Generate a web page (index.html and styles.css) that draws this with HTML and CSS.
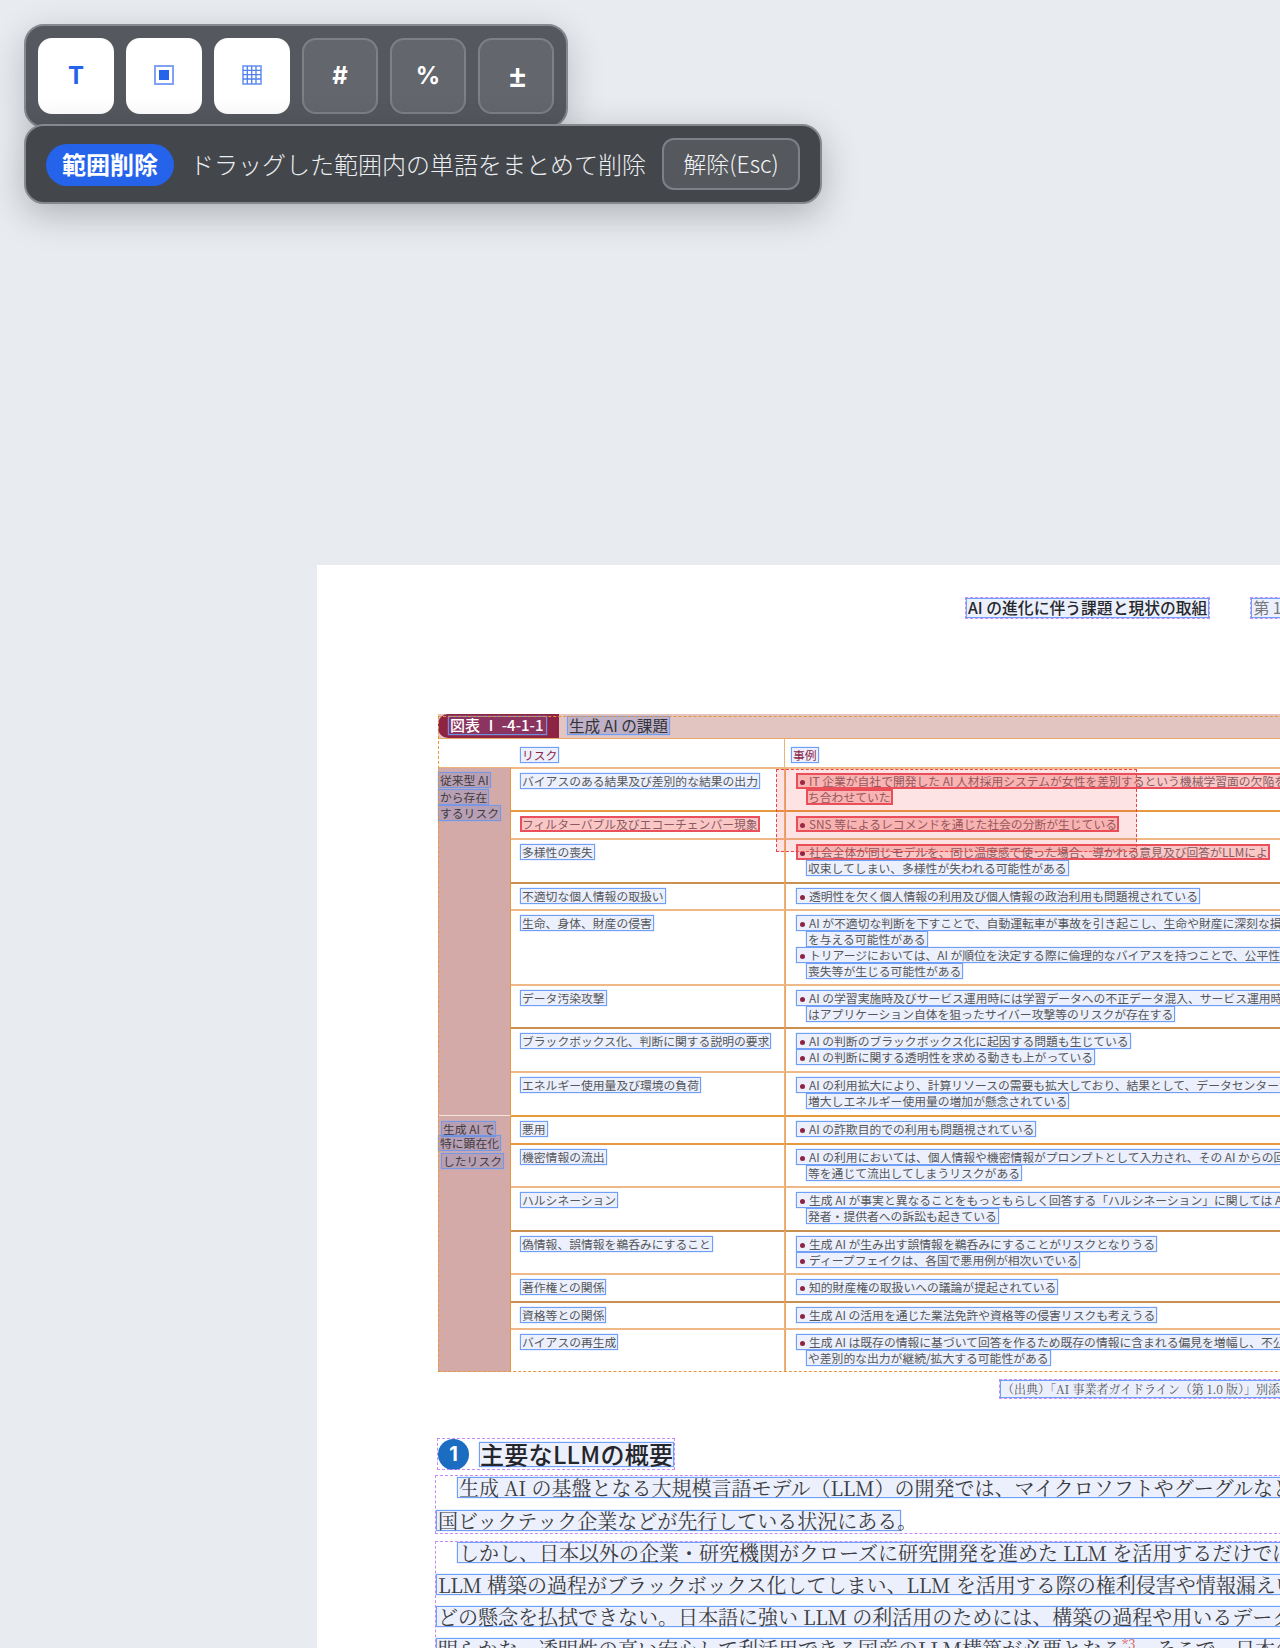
FILE: index.html
```html
<!DOCTYPE html>
<html lang="ja">
<head>
  <meta charset="UTF-8" />
  <meta name="viewport" content="width=device-width, initial-scale=1.0">
  <title>範囲削除</title>
  <link rel="stylesheet" href="styles.css">
</head>
<body>
  <div class="hud">
    <div class="toolbar">
      <button class="tool on t-glyph">T</button>
      <button class="tool on">
        <svg width="20" height="20" viewBox="0 0 20 20"><rect x="1" y="1" width="18" height="18" fill="#fff" stroke="#7fa3f2" stroke-width="2"/><rect x="5" y="5" width="10" height="10" fill="#2563eb"/></svg>
      </button>
      <button class="tool on">
        <svg width="20" height="20" viewBox="0 0 20 20"><rect x="1" y="1" width="18" height="18" fill="#fff" stroke="#6d97f0" stroke-width="1.6"/><path d="M5.3 1v18M9.7 1v18M14 1v18M1 5.3h18M1 9.7h18M1 14h18" stroke="#4f80ee" stroke-width="1.3" fill="none"/></svg>
      </button>
      <button class="tool">#</button>
      <button class="tool">%</button>
      <button class="tool plusminus">±</button>
    </div>
    <div class="modebar">
      <span class="pill">範囲削除</span>
      <span class="hint">ドラッグした範囲内の単語をまとめて削除</span>
      <button class="cancel">解除(Esc)</button>
    </div>
  </div>

  <div class="viewer">
    <div class="page">
      <div class="running">
        <span class="w blk">AI の進化に伴う課題と現状の取組</span>
        <span class="w chap blk">第 1 章　AI 技術の動向</span>
      </div>

      <div class="fig">
        <div class="fig-head">
          <div class="fig-label"><span class="w">図表 Ⅰ -4-1-1</span></div>
          <span class="w fig-title">生成 AI の課題</span>
        </div>
        <div class="fig-cols">
          <div class="col-risk"><span class="w">リスク</span></div>
          <div class="col-case"><span class="w">事例</span></div>
        </div>
        <div class="grid">
          <div class="band band-a">
            <span class="w">従来型 AI</span>
            <span class="w">から存在</span>
            <span class="w">するリスク</span>
          </div>
          <div class="risk lt"><span class="w">バイアスのある結果及び差別的な結果の出力</span></div>
          <div class="case lt">
            <span class="w red bul">IT 企業が自社で開発した AI 人材採用システムが女性を差別するという機械学習面の欠陥を持</span>
            <span class="w red cont">ち合わせていた</span>
          </div>
          <div class="risk"><span class="w red">フィルターバブル及びエコーチェンバー現象</span></div>
          <div class="case"><span class="w red bul">SNS 等によるレコメンドを通じた社会の分断が生じている</span></div>
          <div class="risk lt"><span class="w">多様性の喪失</span></div>
          <div class="case lt">
            <span class="w red bul">社会全体が同じモデルを、同じ温度感で使った場合、導かれる意見及び回答がLLMによ</span>
            <span class="w cont">収束してしまい、多様性が失われる可能性がある</span>
          </div>
          <div class="risk dk"><span class="w">不適切な個人情報の取扱い</span></div>
          <div class="case dk"><span class="w bul">透明性を欠く個人情報の利用及び個人情報の政治利用も問題視されている</span></div>
          <div class="risk lt"><span class="w">生命、身体、財産の侵害</span></div>
          <div class="case lt">
            <span class="w bul">AI が不適切な判断を下すことで、自動運転車が事故を引き起こし、生命や財産に深刻な損害</span>
            <span class="w cont">を与える可能性がある</span>
            <span class="w bul">トリアージにおいては、AI が順位を決定する際に倫理的なバイアスを持つことで、公平性の</span>
            <span class="w cont">喪失等が生じる可能性がある</span>
          </div>
          <div class="risk lt"><span class="w">データ汚染攻撃</span></div>
          <div class="case lt">
            <span class="w bul">AI の学習実施時及びサービス運用時には学習データへの不正データ混入、サービス運用時に</span>
            <span class="w cont">はアプリケーション自体を狙ったサイバー攻撃等のリスクが存在する</span>
          </div>
          <div class="risk dk"><span class="w">ブラックボックス化、判断に関する説明の要求</span></div>
          <div class="case dk">
            <span class="w bul">AI の判断のブラックボックス化に起因する問題も生じている</span>
            <span class="w bul">AI の判断に関する透明性を求める動きも上がっている</span>
          </div>
          <div class="risk lt"><span class="w">エネルギー使用量及び環境の負荷</span></div>
          <div class="case lt">
            <span class="w bul">AI の利用拡大により、計算リソースの需要も拡大しており、結果として、データセンターが</span>
            <span class="w cont">増大しエネルギー使用量の増加が懸念されている</span>
          </div>

          <div class="band band-b">
            <span class="w">生成 AI で</span>
            <span class="w">特に顕在化</span>
            <span class="w">したリスク</span>
          </div>
          <div class="risk"><span class="w">悪用</span></div>
          <div class="case"><span class="w bul">AI の詐欺目的での利用も問題視されている</span></div>
          <div class="risk"><span class="w">機密情報の流出</span></div>
          <div class="case">
            <span class="w bul">AI の利用においては、個人情報や機密情報がプロンプトとして入力され、その AI からの回答</span>
            <span class="w cont">等を通じて流出してしまうリスクがある</span>
          </div>
          <div class="risk lt"><span class="w">ハルシネーション</span></div>
          <div class="case lt">
            <span class="w bul">生成 AI が事実と異なることをもっともらしく回答する「ハルシネーション」に関しては AI 開</span>
            <span class="w cont">発者・提供者への訴訟も起きている</span>
          </div>
          <div class="risk dk"><span class="w">偽情報、誤情報を鵜呑みにすること</span></div>
          <div class="case dk">
            <span class="w bul">生成 AI が生み出す誤情報を鵜呑みにすることがリスクとなりうる</span>
            <span class="w bul">ディープフェイクは、各国で悪用例が相次いでいる</span>
          </div>
          <div class="risk lt"><span class="w">著作権との関係</span></div>
          <div class="case lt"><span class="w bul">知的財産権の取扱いへの議論が提起されている</span></div>
          <div class="risk dk"><span class="w">資格等との関係</span></div>
          <div class="case dk"><span class="w bul">生成 AI の活用を通じた業法免許や資格等の侵害リスクも考えうる</span></div>
          <div class="risk lt"><span class="w">バイアスの再生成</span></div>
          <div class="case lt">
            <span class="w bul">生成 AI は既存の情報に基づいて回答を作るため既存の情報に含まれる偏見を増幅し、不公平</span>
            <span class="w cont">や差別的な出力が継続/拡大する可能性がある</span>
          </div>
        </div>
        <div class="drag-rect"></div>
      </div>

      <div class="source"><span class="w blk">（出典）「AI 事業者ガイドライン（第 1.0 版）」別添（概要）</span></div>

      <div class="heading blk">
        <span class="num">1</span>
        <span class="w">主要なLLMの概要</span>
      </div>

      <div class="para blk">
        <span class="w indent">生成 AI の基盤となる大規模言語モデル（LLM）の開発では、マイクロソフトやグーグルなど米</span>
        <span class="w trim">国ビックテック企業などが先行している状況にある。</span>
      </div>
      <div class="para blk second">
        <span class="w indent">しかし、日本以外の企業・研究機関がクローズに研究開発を進めた LLM を活用するだけでは、</span>
        <span class="w">LLM 構築の過程がブラックボックス化してしまい、LLM を活用する際の権利侵害や情報漏えいな</span>
        <span class="w">どの懸念を払拭できない。日本語に強い LLM の利活用のためには、構築の過程や用いるデータが</span>
        <span class="w">明らかな、透明性の高い安心して利活用できる国産のLLM構築が必要となる<span class="note">*3</span>。そこで、日本の企業</span>
      </div>
    </div>
  </div>
</body>
</html>
```

FILE: styles.css
```css
html, body {
  margin: 0;
  padding: 0;
  height: 1648px;
  overflow: hidden;
}
body {
  font-family: "Noto Sans CJK JP", "Noto Sans", sans-serif;
  background-color: #e8ebf0;
}

/* floating toolbar */
.hud {
  position: absolute;
  top: 24px;
  left: 24px;
  z-index: 5;
  display: flex;
  flex-direction: column;
  align-items: flex-start;
}
.toolbar {
  display: flex;
  gap: 12px;
  padding: 12px;
  background-color: #55585f;
  border: 2px solid #85888d;
  border-radius: 20px;
  box-shadow: 0 10px 36px rgba(0, 0, 0, 0.2);
}
.tool {
  width: 76px;
  height: 76px;
  display: flex;
  align-items: center;
  justify-content: center;
  padding: 0 0 2px;
  font-family: "Inter", sans-serif;
  font-size: 24px;
  font-weight: 700;
  color: #ffffff;
  background-color: #63666d;
  border: 2px solid #7d8086;
  border-radius: 14px;
}
.tool.on {
  background-color: #ffffff;
  border-color: #ffffff;
  color: #2563eb;
}
.tool.plusminus {
  padding-left: 3px;
  font-family: "Noto Sans", sans-serif;
  font-size: 30px;
}
.modebar {
  display: flex;
  align-items: center;
  gap: 16px;
  margin-top: -4px;
  padding: 12px 20px;
  background-color: #43464b;
  border: 2px solid #85888d;
  border-radius: 20px;
  box-shadow: 0 10px 36px rgba(0, 0, 0, 0.25);
}
.pill {
  margin-top: 2px;
  padding: 0 16px;
  height: 42px;
  line-height: 40px;
  font-size: 24px;
  font-weight: 700;
  color: #ffffff;
  background-color: #2563eb;
  border-radius: 21px;
}
.hint {
  margin-top: -2px;
  font-size: 24px;
  font-weight: 300;
  color: #eceef1;
  white-space: nowrap;
}
.cancel {
  width: 138px;
  height: 52px;
  padding: 0 0 2px;
  font-family: "Noto Sans CJK JP", sans-serif;
  font-size: 23px;
  font-weight: 300;
  color: #f3f4f6;
  background-color: #55585d;
  border: 2px solid #7d8086;
  border-radius: 12px;
}

/* document page */
.viewer {
  padding: 565px 0 0 317px;
}
.page {
  width: 1000px;
  height: 1083px;
  box-sizing: border-box;
  padding: 33px 0 0 121px;
  background-color: #ffffff;
}
.w {
  display: inline-block;
  box-sizing: border-box;
  white-space: nowrap;
  font-size: 11.8px;
  line-height: 14px;
  padding: 0 1px;
  color: #55565a;
  background-color: rgba(190, 205, 245, 0.3);
  border: 1px solid #6f9ff7;
  box-shadow: 0 0 1px #7fa9f7;
}
.red {
  padding: 0;
  line-height: 12px;
  color: #8a5a60;
  background-color: rgba(239, 68, 68, 0.3);
  border: 2px solid #e9505c;
  box-shadow: none;
}
.blk {
  outline: 1px dashed #c48bfb;
}
.running {
  display: flex;
  gap: 42px;
  margin-left: 528px;
  height: 20px;
}
.running .w {
  font-size: 15.8px;
  font-weight: 500;
  line-height: 18px;
  color: #27282c;
}
.running .chap {
  font-weight: 400;
  color: #77787c;
}

/* figure */
.fig {
  position: relative;
  width: 900px;
  margin-top: 96px;
}
.fig::after {
  content: "";
  position: absolute;
  top: 2px;
  left: 0;
  right: 0;
  bottom: 0;
  border: 1.5px dashed #e8963c;
  pointer-events: none;
}
.fig-head {
  display: flex;
  align-items: center;
  height: 25px;
  background-color: #e2c4c0;
  border-bottom: 1.5px solid #e9a968;
  box-sizing: border-box;
}
.fig-label {
  display: flex;
  width: 121px;
  height: 100%;
  box-sizing: border-box;
  padding: 2px 0 0 10px;
  background-color: #8e2444;
  border-radius: 10px 0 0 10px;
}
.fig-label .w {
  width: 99px;
  height: 19px;
  font-size: 15px;
  font-weight: 500;
  line-height: 16px;
  color: #ffffff;
  background-color: rgba(120, 130, 220, 0.18);
  border-color: #6d8fe6;
}
.fig-title {
  margin: -2px 0 0 8px;
  font-size: 15.6px;
  line-height: 17px;
  color: #33343a;
  background-color: rgba(110, 130, 210, 0.3);
}
.fig-cols {
  display: grid;
  grid-template-columns: 347px 1fr;
  height: 28px;
  box-sizing: border-box;
}
.col-risk {
  display: flex;
  align-items: flex-start;
  padding: 8px 0 0 82px;
  border-right: 1.5px solid #edb27a;
}
.col-case {
  display: flex;
  align-items: flex-start;
  padding: 8px 0 0 6px;
}
.fig-cols .w {
  height: 16px;
  color: #8e2444;
}
.grid {
  display: grid;
  grid-template-columns: 73px 274px 1fr;
  grid-template-rows: 43px 28px 44px 27px 75px 43px 44px 44px 28px 43px 44px 43px 28px 27px 44px;
}
.band {
  display: flex;
  flex-direction: column;
  align-items: flex-start;
  background-color: #d3aaa8;
  border-top: 1.5px solid #edb27a;
  border-right: 1.5px solid #e8963c;
}
.band .w {
  color: #3f3b40;
  background-color: rgba(105, 130, 215, 0.25);
  border-color: #7796e4;
}
.band-a {
  grid-row: 1 / span 8;
  padding-top: 4px;
}
.band-a .w:nth-child(2) {
  margin-top: 1px;
}
.band-b {
  grid-row: 9 / span 7;
  padding: 5px 0 0 3px;
  border-top-color: #f5e6dd;
}
.band-b .w:nth-child(2) {
  margin: -2px 0 0 -3px;
}
.band-b .w:nth-child(3) {
  margin-top: 2px;
}
.risk,
.case {
  display: flex;
  flex-direction: column;
  align-items: flex-start;
  box-sizing: border-box;
  padding-top: 4px;
  border-top: 2px solid #e6993f;
}
.lt {
  border-top-color: #eeb987;
}
.dk {
  border-top-color: #c9904f;
}
.risk {
  padding-left: 9px;
  border-right: 1.5px solid #edb27a;
}
.case {
  padding-left: 10px;
  border-left: 1px solid #e8a664;
}
.risk .w,
.case .w {
  height: 16px;
}
.bul {
  padding-left: 3px;
}
.red.bul {
  padding-left: 2px;
}
.bul::before {
  content: "";
  display: inline-block;
  width: 5px;
  height: 5px;
  margin: 0 4px 1px 0;
  vertical-align: middle;
  background-color: #8e2444;
  border-radius: 50%;
}
.cont {
  margin-left: 10px;
}
.drag-rect {
  position: absolute;
  left: 338px;
  top: 55px;
  width: 361px;
  height: 83px;
  box-sizing: border-box;
  background-color: rgba(239, 68, 68, 0.15);
  border: 1.3px dashed #ef4444;
  z-index: 2;
}

/* text below the figure */
.source {
  display: flex;
  margin: 8px 0 0 562px;
}
.source .w {
  height: 18px;
  font-family: "Noto Serif CJK JP", "Liberation Serif", "Noto Sans CJK JP", serif;
  font-size: 12px;
  line-height: 15px;
}
.heading {
  display: flex;
  align-items: center;
  gap: 10px;
  width: fit-content;
  margin-top: 41px;
  height: 30px;
}
.num {
  width: 31px;
  height: 31px;
  line-height: 31px;
  text-align: center;
  font-family: "Inter", sans-serif;
  font-size: 20px;
  font-weight: 700;
  color: #ffffff;
  background-color: #1b6dc1;
  border-radius: 50%;
}
.heading .w {
  height: 25px;
  padding: 0;
  font-size: 24px;
  font-weight: 500;
  letter-spacing: 0.3px;
  line-height: 22px;
  color: #25262b;
}
.para {
  display: flex;
  flex-direction: column;
  align-items: flex-start;
  gap: 12px;
  width: 860px;
  margin: 7px 0 0 -2px;
  padding: 1px 0 2px;
}
.para.second {
  gap: 11px;
  margin-top: 9px;
  padding-top: 0;
}
.para .w {
  height: 21px;
  font-family: "Noto Serif CJK JP", "Liberation Serif", "Noto Sans CJK JP", serif;
  font-size: 20px;
  line-height: 19px;
  color: #3a3b40;
}
.para .indent {
  margin-left: 21px;
}
.para .trim {
  width: 465px;
}
.note {
  color: #d9534f;
  font-size: 13px;
  vertical-align: super;
  line-height: 0;
}
```
